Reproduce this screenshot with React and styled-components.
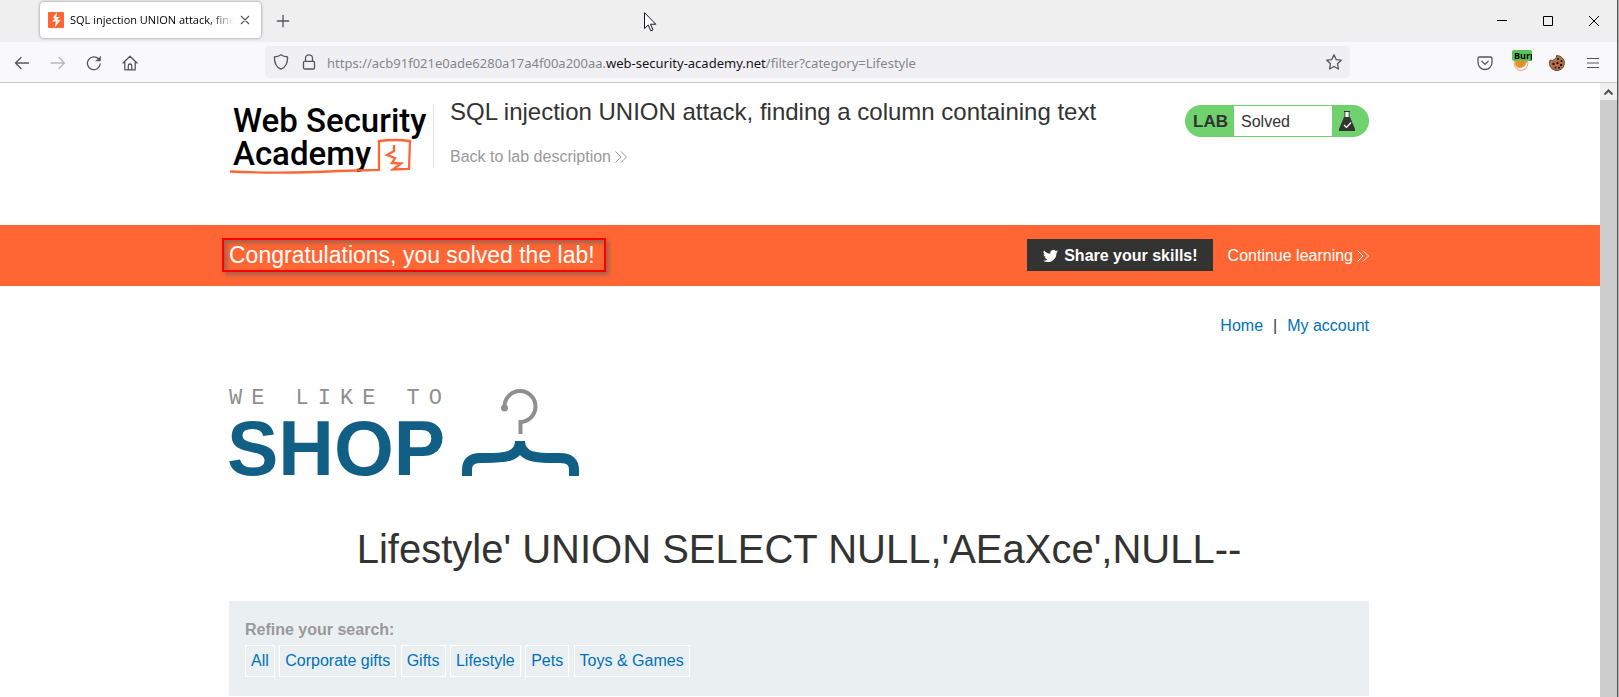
import React from 'react';
import styled, { createGlobalStyle } from 'styled-components';

const Global = createGlobalStyle`
  * { box-sizing: border-box; }
  html, body { margin: 0; height: 100%; }
  #root { height: 100%; }
  body { font-family: Arial, "Liberation Sans", sans-serif; font-size: 16px; color: #333332; background: #b4b4b4; overflow: hidden; }
  button { font: inherit; color: inherit; background: none; border: 0; padding: 0; margin: 0; }
  svg { display: block; flex: none; }
`;

const Window = styled.div`
  min-height: 100%;
  display: flex;
  flex-direction: column;
  margin-right: 1px;
  border-right: 1px solid #555;
  background: #fff;
`;
const TabStrip = styled.header`
  height: 42px;
  background: #efefef;
  display: flex;
  align-items: center;
  padding: 0 13px 0 40px;
  font-family: "Segoe UI", "Open Sans", "Noto Sans", sans-serif;
`;
const Tab = styled.div`
  width: 221px;
  height: 36px;
  margin: 0 12px 2px 0;
  padding: 0 12px 0 8px;
  display: flex;
  align-items: center;
  gap: 6px;
  border-radius: 4px;
  background: #fff;
  box-shadow: 0 0 3px rgba(80, 80, 110, 0.7);
`;
const TabTitle = styled.span`
  flex: 1;
  overflow: hidden;
  white-space: nowrap;
  font-size: 11px;
  line-height: 16px;
  color: #000;
  mask-image: linear-gradient(to right, #000 140px, transparent 164px);
`;
const IconButton = styled.button`
  display: flex;
  align-items: center;
  justify-content: center;
  width: ${(p) => p.$w || 20}px;
  height: 24px;
  color: ${(p) => (p.$dim ? '#b8b8bd' : '#55555f')};
`;
const Pointer = styled.svg`
  position: absolute;
  top: 12px;
  left: 644px;
  width: 13px;
  height: 20px;
`;
const WindowControls = styled.div`
  margin-left: auto;
  display: flex;
  gap: 26px;
`;
const Toolbar = styled.nav`
  height: 41px;
  background: #f9f9fb;
  border-bottom: 1px solid #c9c9cb;
  display: flex;
  align-items: center;
  padding: 0 12px;
`;
const NavButtons = styled.div`
  display: flex;
  gap: 16px;
  width: 253px;
  padding-top: 1px;
  flex: none;
`;
const AddressBar = styled.div`
  flex: 1;
  margin-right: 123px;
  height: 32px;
  border-radius: 4px;
  background: #f0f0f4;
  display: flex;
  align-items: center;
  padding: 0 6px;
  gap: 8px;
`;
const Url = styled.div`
  flex: 1;
  padding-top: 1px;
  font-family: "Segoe UI", "Noto Sans", "Open Sans", sans-serif;
  font-size: 13px;
  line-height: 18px;
  color: #85858d;
  white-space: nowrap;
  b { font-weight: 400; color: #15141a; }
`;
const Extensions = styled.div`
  display: flex;
  gap: 12px;
  padding-top: 1px;
`;
const Extension = styled.button`
  position: relative;
  display: flex;
  align-items: center;
  justify-content: center;
  width: 24px;
  height: 24px;
  color: #55555f;
`;
const Badge = styled.span`
  position: absolute;
  top: -1px;
  left: 3px;
  width: 20px;
  height: 11px;
  overflow: hidden;
  border-radius: 2px;
  background: #58c458;
  color: #000;
  padding-left: 2px;
  font: bold 9px/11px "Open Sans", "Noto Sans", sans-serif;
  text-align: left;
`;
const Viewport = styled.div`
  flex: 1;
  display: flex;
`;
const Page = styled.main`
  flex: 1;
  min-width: 0;
`;
const Scrollbar = styled.div`
  width: 17px;
  background: #cdcdcd;
`;
const ScrollUp = styled.button`
  display: flex;
  align-items: center;
  justify-content: center;
  width: 17px;
  height: 17px;
  background: #f0f0f0;
  color: #505050;
`;
const Container = styled.div`
  max-width: 1142px;
  margin: 0 auto;
  padding-right: 2px;
`;
const LabHeader = styled.section`
  display: flex;
  align-items: flex-start;
  height: 142px;
  padding-top: 15px;
`;
const AcademyLogo = styled.a`
  width: 204px;
  height: 80px;
  color: #000;
`;
const Divider = styled.div`
  width: 1px;
  height: 63px;
  margin-top: 7px;
  background: #e0e0e0;
`;
const TitleBlock = styled.div`
  display: flex;
  flex-direction: column;
  align-items: flex-start;
  gap: 19px;
  flex: 1;
  padding-left: 16px;
`;
const LabTitle = styled.h2`
  margin: 0;
  font-weight: 400;
  font-size: 24px;
  line-height: 28px;
`;
const ArrowLink = styled.a`
  display: inline-flex;
  align-items: center;
  gap: 4px;
  color: ${(p) => p.$color};
  font-size: 16px;
  line-height: 24px;
  text-decoration: none;
`;
const LabStatus = styled.div`
  display: flex;
  width: 184px;
  height: 32px;
  margin-top: 7px;
  padding: 1px 0;
  border-radius: 16px;
  background: #70d16f;
  line-height: 32px;
`;
const LabTag = styled.strong`
  width: 49px;
  padding-left: 8px;
  font-size: 17px;
`;
const LabState = styled.span`
  width: 98px;
  height: 30px;
  padding-left: 7px;
  background: #fff;
`;
const LabFlask = styled.span`
  padding: 4px 0 0 6px;
`;
const Banner = styled.section`
  background: #ff6633;
`;
const BannerRow = styled(Container)`
  display: flex;
  align-items: center;
  height: 61px;
  padding-bottom: 1px;
`;
const Congrats = styled.h3`
  margin: 0 auto 0 -7px;
  padding: 0 9px 0 5px;
  border: 2px solid #fe0000;
  box-shadow: 3px 3px 4px rgba(110, 90, 90, 0.6), inset 3px 3px 4px rgba(110, 90, 90, 0.6);
  color: #fff;
  font-weight: 400;
  font-size: 23px;
  line-height: 30px;
`;
const ShareButton = styled.button`
  display: flex;
  align-items: center;
  gap: 6px;
  height: 32px;
  margin-right: 15px;
  padding: 2px 15px 0 16px;
  background: #333332;
  color: #fff;
  font-weight: 700;
`;
const ContinueLink = styled(ArrowLink)`
  padding-top: 2px;
`;
const TopLinks = styled.nav`
  display: flex;
  justify-content: flex-end;
  gap: 10px;
  padding-top: 28px;
  line-height: 24px;
`;
const TextLink = styled.a`
  color: #0071b8;
  text-decoration: none;
`;
const ShopLogo = styled.div`
  display: flex;
  align-items: flex-start;
  gap: 15px;
  margin-top: 51px;
  height: 91px;
`;
const ShopWords = styled.div`
  width: 217px;
  white-space: nowrap;
`;
const ShopTop = styled.div`
  font: 22px/20px "Liberation Mono", monospace;
  letter-spacing: 9px;
  color: #8f8f8f;
`;
const ShopName = styled.div`
  margin-left: -2px;
  font-weight: 700;
  font-size: 77px;
  line-height: 78px;
  color: #115f85;
`;
const Heading = styled.h1`
  margin: 45px 0 0;
  text-align: center;
  font-weight: 400;
  font-size: 40px;
  line-height: 48px;
`;
const Filters = styled.section`
  margin-top: 28px;
  padding: 17px 16px 19px;
  background: #eaeff2;
`;
const FilterLabel = styled.div`
  color: #999;
  font-weight: 700;
  line-height: 24px;
`;
const FilterRow = styled.div`
  margin-top: 3px;
`;
const FilterLink = styled(TextLink)`
  display: inline-block;
  vertical-align: top;
  padding: 0 5px;
  border: 1px solid #fff;
  line-height: 30px;
`;

const Stroke = ({ size = 16, w = 1.3, children }) => (
  <svg width={size} height={size} viewBox="0 0 16 16" fill="none" stroke="currentColor" strokeWidth={w} strokeLinecap="round" strokeLinejoin="round">{children}</svg>
);
const Chevrons = () => (
  <svg width="12" height="12" viewBox="0 0 12 12" fill="none" stroke="currentColor" strokeWidth="1"><path d="M.5.5 6 6 .5 11.5M6 .5 11.5 6 6 11.5" /></svg>
);

const categories = ['All', 'Corporate gifts', 'Gifts', 'Lifestyle', 'Pets', 'Toys & Games'];

export default function App() {
  return (
    <>
      <Global />
      <Window>
        <TabStrip>
          <Tab>
            <svg width="16" height="16" viewBox="0 0 16 16"><rect width="16" height="16" rx="1" fill="#ff6633" /><path d="M9.3 0 5 5.6 7.2 7.2 3.5 9.2 8 9.4 6.6 15.8 12.4 8.3 8.8 7.6 12 5 8.2 5Z" fill="#fff" /></svg>
            <TabTitle>SQL injection UNION attack, find</TabTitle>
            <IconButton aria-label="Close tab" $w={9}><Stroke size={10} w={1.8}><path d="M2 2l12 12M14 2 2 14" /></Stroke></IconButton>
          </Tab>
          <IconButton aria-label="New tab"><Stroke size={14} w={1.5}><path d="M8 1.5v13M1.5 8h13" /></Stroke></IconButton>
          <Pointer aria-hidden="true" viewBox="0 0 13 20"><path d="M.5.7V16.5L4.2 13 6.8 18.8 9 17.8 6.5 12.2H11.8Z" fill="#fff" stroke="#15152a" /></Pointer>
          <WindowControls>
            <IconButton aria-label="Minimize"><svg width="10" height="10" stroke="#000"><path d="M0 4.5h10" /></svg></IconButton>
            <IconButton aria-label="Maximize"><svg width="10" height="10" stroke="#000" fill="none"><path d="M.5.5h9v9h-9z" /></svg></IconButton>
            <IconButton aria-label="Close"><svg width="10" height="10" stroke="#000"><path d="M0 0l10 10M10 0 0 10" /></svg></IconButton>
          </WindowControls>
        </TabStrip>
        <Toolbar>
          <NavButtons>
            <IconButton aria-label="Back"><Stroke><path d="M14.5 8H1.5M7 2.5 1.5 8 7 13.5" /></Stroke></IconButton>
            <IconButton aria-label="Forward" $dim><Stroke><path d="M1 8h13.5M9 2.5 14.5 8 9 13.5" /></Stroke></IconButton>
            <IconButton aria-label="Reload"><Stroke><path d="M14.2 9A6.4 6.4 0 1 1 12.6 4" /><path d="M14.5 1.5V6H10Z" fill="currentColor" strokeWidth=".5" /></Stroke></IconButton>
            <IconButton aria-label="Home"><Stroke><path d="M1 8 8 1.2 15 8M2.8 7v7.8h10.4V7M6.3 14.5V10.5Q6.3 9 8 9T9.7 10.5v4" /></Stroke></IconButton>
          </NavButtons>
          <AddressBar>
            <IconButton aria-label="Tracking protection"><Stroke><path d="M8 .8c2 1.5 4.2 2 6.6 2.2C14.7 8.5 13 13 8 15.2 3 13 1.3 8.5 1.4 3 3.8 2.8 6 2.3 8 .8Z" /></Stroke></IconButton>
            <IconButton aria-label="Connection secure"><Stroke><path d="M3.5 7.3h9a1 1 0 0 1 1 1v5.4a1.3 1.3 0 0 1-1.3 1.3H3.8a1.3 1.3 0 0 1-1.3-1.3V8.3a1 1 0 0 1 1-1ZM4.5 7V4.3a3.5 3.5 0 0 1 7 0V7" /></Stroke></IconButton>
            <Url>https://acb91f021e0ade6280a17a4f00a200aa.<b>web-security-academy.net</b>/filter?category=Lifestyle</Url>
            <IconButton aria-label="Bookmark"><Stroke><path d="m8 .8 2.2 4.8 5 .6-3.7 3.5 1 5.3L8 12.5 3.5 15l1-5.3L.8 6.2l5-.6Z" /></Stroke></IconButton>
          </AddressBar>
          <Extensions>
            <Extension aria-label="Pocket"><Stroke><path d="M2.5 2h11a1.5 1.5 0 0 1 1.5 1.5V7.5a7 7 0 0 1-14 0V3.5A1.5 1.5 0 0 1 2.5 2ZM4.8 6.3 8 9.4l3.2-3.1" /></Stroke></Extension>
            <Extension aria-label="FoxyProxy">
              <svg width="16" height="16" viewBox="0 0 16 16"><circle cx="8" cy="8.5" r="6.8" fill="#fff" stroke="#f3b57a" strokeWidth="1.2" /><path d="M2 6h12l-2 5-4 2-5-1.5Z" fill="#f28a1c" /><path d="M2 8q2 6.5 6 4.5T14 6" stroke="#aaa" fill="none" /></svg>
              <Badge>Burp</Badge>
            </Extension>
            <Extension aria-label="Cookies">
              <svg width="16" height="16" viewBox="0 0 16 16"><path d="M7.5.6Q8 3 5.8 4 4.5 6.2 1 5.2A7.5 7.5 0 1 0 7.5.6Z" fill="#b5714a" stroke="#6a4534" /><g fill="#1c1210"><circle cx="9" cy="4" r="1" /><circle cx="12.5" cy="6" r="1" /><circle cx="8.5" cy="8" r="1.2" /><circle cx="4.5" cy="9" r="1.2" /><circle cx="12" cy="10" r="1.2" /><circle cx="6.5" cy="12.5" r="1" /><circle cx="10" cy="12.8" r="1" /></g></svg>
            </Extension>
            <Extension aria-label="Menu"><svg width="12" height="10" stroke="currentColor"><path d="M0 .5h12M0 5h12M0 9.5h12" /></svg></Extension>
          </Extensions>
        </Toolbar>
        <Viewport>
          <Page>
            <Container>
              <LabHeader>
                <AcademyLogo href="#" aria-label="Web Security Academy">
                  <svg width="204" height="80" viewBox="0 0 204 80">
                    <g fontFamily="Roboto, sans-serif" fontWeight="500" fontSize="33" fill="#000"><text x="4" y="34">Web Security</text><text x="4" y="67">Academy</text></g>
                    <path d="M1 73.5Q50 76 110 73L150 72V43Q166 41 181 43L180 71 164 71.5 172 65.5 163 65 166 60 158 57 165 53V47" fill="none" stroke="#ff6633" strokeWidth="2.3" />
                  </svg>
                </AcademyLogo>
                <Divider />
                <TitleBlock>
                  <LabTitle>SQL injection UNION attack, finding a column containing text</LabTitle>
                  <ArrowLink href="#" $color="#999">Back to lab description <Chevrons /></ArrowLink>
                </TitleBlock>
                <LabStatus>
                  <LabTag>LAB</LabTag>
                  <LabState>Solved</LabState>
                  <LabFlask><svg width="18" height="22" viewBox="0 0 18 22"><path d="M6 1.5h6M7 2v6M11 2v6" stroke="#333" fill="none" /><path d="M7.5 2h3v5h-3z" fill="#fff" /><path d="M6 7h6l5 12v2H1v-2Z" fill="#333332" /><path d="m6 15 2.5 2.5L13 12.5" stroke="#fff" strokeWidth="1.2" fill="none" /></svg></LabFlask>
                </LabStatus>
              </LabHeader>
            </Container>
            <Banner>
              <BannerRow>
                <Congrats>Congratulations, you solved the lab!</Congrats>
                <ShareButton><svg width="15" height="16" viewBox="0 0 24 24" fill="#fff"><path d="M23.95 4.57a10 10 0 0 1-2.82.78 4.96 4.96 0 0 0 2.16-2.72c-.95.55-2 .95-3.13 1.18a4.92 4.92 0 0 0-8.38 4.48C7.69 8.1 4.07 6.13 1.64 3.16a4.92 4.92 0 0 0 1.52 6.57 4.9 4.9 0 0 1-2.23-.61v.06a4.92 4.92 0 0 0 3.95 4.83 5 5 0 0 1-2.21.08 4.94 4.94 0 0 0 4.6 3.42A9.87 9.87 0 0 1 0 19.54a13.99 13.99 0 0 0 7.55 2.21c9.05 0 14-7.5 14-13.98 0-.21 0-.42-.02-.63a9.94 9.94 0 0 0 2.42-2.57Z" /></svg>Share your skills!</ShareButton>
                <ContinueLink href="#" $color="#fff">Continue learning <Chevrons /></ContinueLink>
              </BannerRow>
            </Banner>
            <Container>
              <TopLinks><TextLink href="#">Home</TextLink><span>|</span><TextLink href="#">My account</TextLink></TopLinks>
              <ShopLogo>
                <ShopWords><ShopTop>WE LIKE TO</ShopTop><ShopName>SHOP</ShopName></ShopWords>
                <svg width="119" height="88" viewBox="0 0 119 88" fill="none">
                  <path d="M43.5 17.5A15.5 15.5 0 1 1 59.5 33V45" stroke="#8f8f8f" strokeWidth="4" />
                  <circle cx="43.5" cy="19" r="3.5" fill="#8f8f8f" />
                  <path d="M6 87V81Q6 69 19 69C40 69 59 70 59 52C59 70 78 69 99 69Q113 69 113 81V87" stroke="#115f85" strokeWidth="10" />
                </svg>
              </ShopLogo>
              <Heading>Lifestyle' UNION SELECT NULL,'AEaXce',NULL--</Heading>
              <Filters>
                <FilterLabel>Refine your search:</FilterLabel>
                <FilterRow>
                  {categories.map((name) => (
                    <React.Fragment key={name}><FilterLink href="#">{name}</FilterLink>{' '}</React.Fragment>
                  ))}
                </FilterRow>
              </Filters>
            </Container>
          </Page>
          <Scrollbar><ScrollUp aria-label="Scroll up"><svg width="9" height="6" stroke="currentColor" strokeWidth="2" fill="none"><path d="M.5 5.5 4.5 1.5 8.5 5.5" /></svg></ScrollUp></Scrollbar>
        </Viewport>
      </Window>
    </>
  );
}
